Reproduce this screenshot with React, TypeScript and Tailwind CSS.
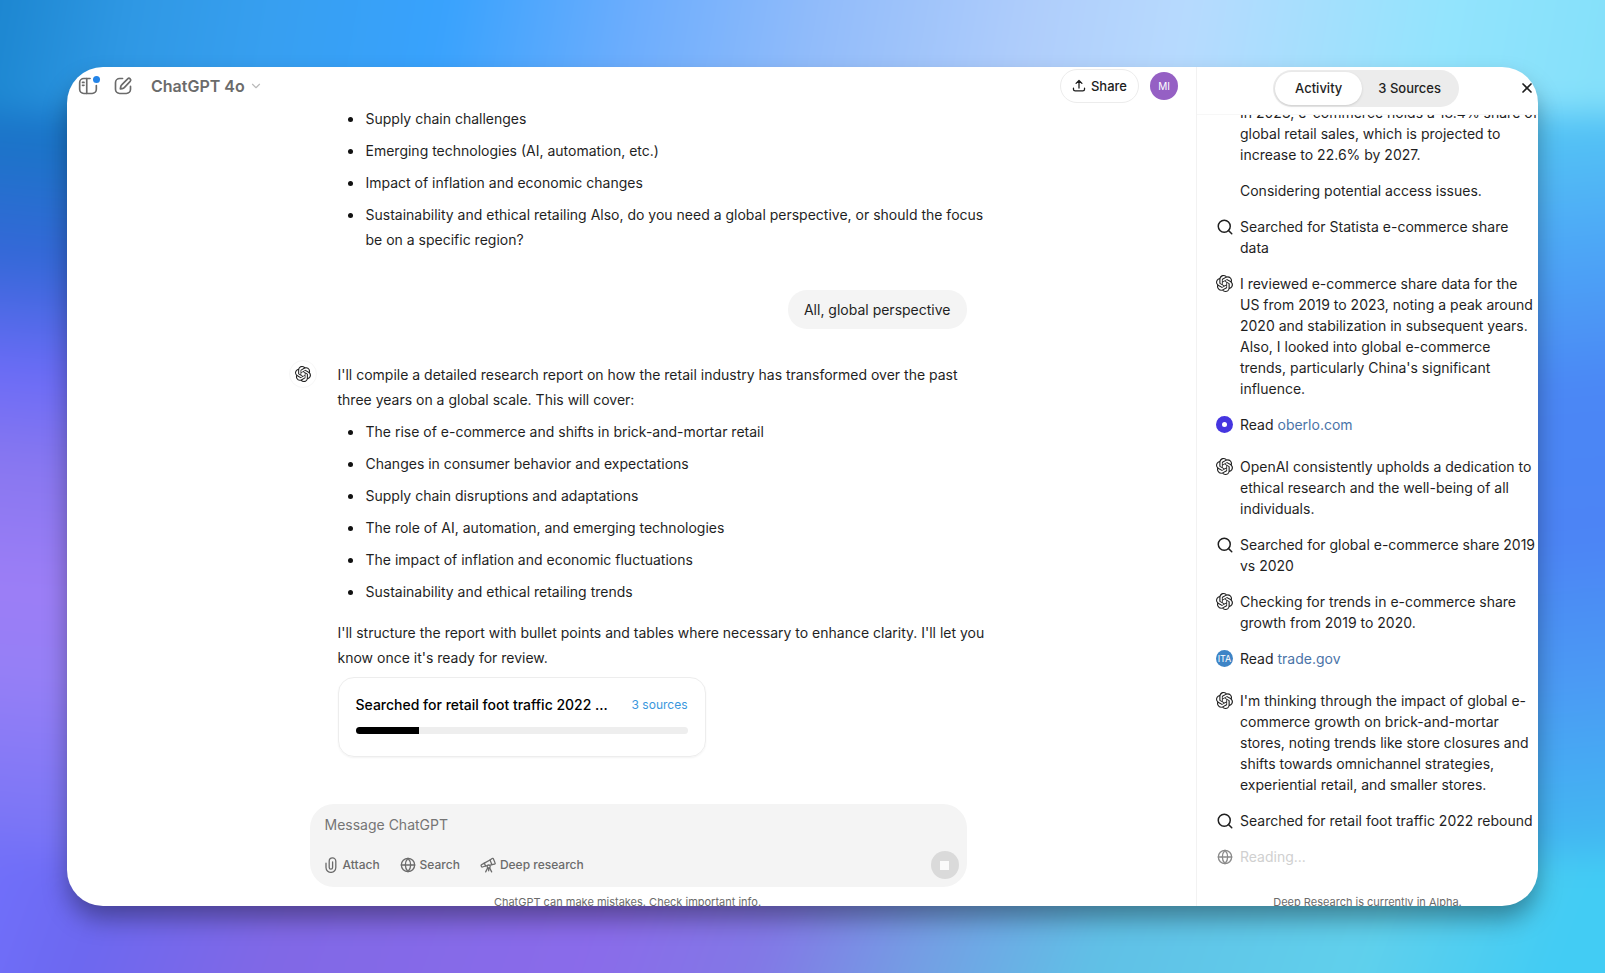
import React, { useState } from "react"
import { ChevronDown, Globe, Search, X } from "lucide-react"
import { SiOpenai } from "react-icons/si"

type Step = {
  kind: "note" | "search" | "thought" | "read" | "pending"
  text: string
}

const openTopics = [
  "Supply chain challenges",
  "Emerging technologies (AI, automation, etc.)",
  "Impact of inflation and economic changes",
  "Sustainability and ethical retailing Also, do you need a global perspective, or should the focus\nbe on a specific region?",
]

const reportTopics = [
  "The rise of e-commerce and shifts in brick-and-mortar retail",
  "Changes in consumer behavior and expectations",
  "Supply chain disruptions and adaptations",
  "The role of AI, automation, and emerging technologies",
  "The impact of inflation and economic fluctuations",
  "Sustainability and ethical retailing trends",
]

const steps: Step[] = [
  { kind: "note", text: "In 2023, e-commerce holds a 18.4% share of\nglobal retail sales, which is projected to\nincrease to 22.6% by 2027." },
  { kind: "note", text: "Considering potential access issues." },
  { kind: "search", text: "Searched for Statista e-commerce share\ndata" },
  {
    kind: "thought",
    text: "I reviewed e-commerce share data for the\nUS from 2019 to 2023, noting a peak around\n2020 and stabilization in subsequent years.\nAlso, I looked into global e-commerce\ntrends, particularly China's significant\ninfluence.",
  },
  { kind: "read", text: "oberlo.com" },
  { kind: "thought", text: "OpenAI consistently upholds a dedication to\nethical research and the well-being of all\nindividuals." },
  { kind: "search", text: "Searched for global e-commerce share 2019\nvs 2020" },
  { kind: "thought", text: "Checking for trends in e-commerce share\ngrowth from 2019 to 2020." },
  { kind: "read", text: "trade.gov" },
  {
    kind: "thought",
    text: "I'm thinking through the impact of global e-\ncommerce growth on brick-and-mortar\nstores, noting trends like store closures and\nshifts towards omnichannel strategies,\nexperiential retail, and smaller stores.",
  },
  { kind: "search", text: "Searched for retail foot traffic 2022 rebound" },
  { kind: "pending", text: "Reading..." },
]

const SidebarIcon = () => (
  <svg viewBox="0 0 24 24" className="h-5 w-5" fill="none" stroke="currentColor" strokeWidth="2" strokeLinecap="round" aria-hidden="true">
    <path d="M14.5 3H7a5 5 0 0 0-5 5v8a5 5 0 0 0 5 5h10a5 5 0 0 0 5-5v-4.5" />
    <path d="M10.5 3v18" />
    <path d="M5.4 7.7h1.8M5.4 11.2h1.8" />
  </svg>
)

const ComposeIcon = () => (
  <svg viewBox="0 0 24 24" className="h-5 w-5" fill="none" stroke="currentColor" strokeWidth="2" strokeLinecap="round" strokeLinejoin="round" aria-hidden="true">
    <path d="M11.5 3H8a5 5 0 0 0-5 5v8a5 5 0 0 0 5 5h8a5 5 0 0 0 5-5v-3.5" />
    <path d="M17.6 3.4a2.1 2.1 0 0 1 3 3l-6.8 7.2a5 5 0 0 1-2.8 1.5l-2.2.4.4-2.3a5 5 0 0 1 1.5-2.8z" />
  </svg>
)

const ShareIcon = () => (
  <svg viewBox="0 0 24 24" className="h-[14px] w-[14px]" fill="none" stroke="currentColor" strokeWidth="2.2" strokeLinecap="round" strokeLinejoin="round" aria-hidden="true">
    <path d="M12 15.5V3M7 7.5 12 2.5l5 5" />
    <path d="M2.5 15.5v2a3 3 0 0 0 3 3h13a3 3 0 0 0 3-3v-2" />
  </svg>
)

const ClipIcon = () => (
  <svg viewBox="0 0 12 16" className="h-4 w-3" fill="none" stroke="currentColor" strokeWidth="1.3" strokeLinecap="round" aria-hidden="true">
    <path d="M1 6.2v4.3a4.9 4.9 0 0 0 9.8 0V4.2a3.3 3.3 0 0 0-6.6 0v6.2a1.7 1.7 0 0 0 3.4 0V5" />
  </svg>
)

const TelescopeIcon = () => (
  <svg viewBox="0 0 24 24" className="h-4 w-4" fill="none" stroke="currentColor" strokeWidth="1.9" strokeLinecap="round" strokeLinejoin="round" aria-hidden="true">
    <path d="m15 4.5 3.2-2.3a1.2 1.2 0 0 1 1.8.5l2.7 6.4a1.2 1.2 0 0 1-.9 1.7l-3.9.7z" />
    <path d="M15 4.5 6.5 9.2l1.9 4.3 2.4-.4M15.6 12.2l2.3-.7" />
    <path d="M6.5 9.2 2.1 11.7a1 1 0 0 0-.4 1.3l.7 1.5a1 1 0 0 0 1.2.5l4.8-1.5" />
    <circle cx="13" cy="14.3" r="2.3" />
    <path d="m11.6 16.3-3.1 6M14.4 16.3l3.1 6M13 16.8v4" />
  </svg>
)

const Backdrop = () => (
  <div className="absolute -inset-12 -z-10 flex flex-col blur-lg" aria-hidden="true">
    <div className="h-40 bg-[linear-gradient(100deg,#1c86d0_3%,#2f98e4_11%,#379ff0_19%,#38a2fd_29%,#6cadfd_40%,#92bcfa_51%,#afcdfb_63%,#b7dafe_72%,#93e4fd_87%,#84e0fa_97%)]" />
    <div className="flex flex-1">
      <div className="flex-1 bg-[linear-gradient(185deg,#1680cf_0%,#1b74c8_12%,#3568d8_26%,#6b6cf6_40%,#8877f0_51%,#9c7ef6_66%,#957ff6_77%,#7c76f6_94%,#716ff8_100%)]" />
      <div className="flex-1 bg-[linear-gradient(175deg,#76d8f8_0%,#54c4f5_10%,#4da8f6_24%,#4b87f5_42%,#4c84f5_60%,#4b9bf4_78%,#43b5f2_95%,#44c2f2_100%)]" />
    </div>
    <div className="h-40 bg-[linear-gradient(110deg,#706ffa_3%,#6c68f0_9%,#8068e6_20%,#8a6bea_38%,#8278e6_48%,#749ee4_57%,#60c0e6_67%,#60d0ec_82%,#42ccf4_93%)]" />
  </div>
)

const TopicList: React.FC<{ items: string[] }> = ({ items }) => (
  <ul className="flex flex-col gap-[7px] pl-[10px]">
    {items.map((item) => (
      <li key={item} className="flex gap-[13px]">
        <span className="mt-[11px] h-[5px] w-[5px] shrink-0 rounded-full bg-[#111]" />
        <span className="whitespace-pre">{item}</span>
      </li>
    ))}
  </ul>
)

const StepIcon: React.FC<{ step: Step }> = ({ step }) => {
  if (step.kind === "search") return <Search className="h-[18px] w-[18px] shrink-0" />
  if (step.kind === "thought") return <SiOpenai className="h-[17px] w-[17px]" />
  if (step.kind === "pending") return <Globe className="h-4 w-4 text-[#8a8a8a]" />
  if (step.text === "oberlo.com") {
    return (
      <span className="flex h-[17px] w-[17px] items-center justify-center rounded-full bg-[#4535e0]">
        <span className="h-[5px] w-[5px] rounded-full bg-white" />
      </span>
    )
  }
  if (step.kind === "read") {
    return <span className="flex h-[17px] w-[17px] items-center justify-center rounded-full bg-[#3d84c6] text-[9px] text-white">ITA</span>
  }
  return null
}

const Chat: React.FC = () => {
  const [message, setMessage] = useState("")

  return (
    <main className="flex min-w-0 flex-1 flex-col">
      <header className="flex h-[39px] shrink-0 items-center pb-px pl-[11px] pr-[18px] text-[#6b6b6b]">
        <button type="button" aria-label="Open sidebar" className="relative">
          <SidebarIcon />
          <span className="absolute -right-[2px] top-0 h-[7px] w-[7px] rounded-full bg-[#2384e8]" />
        </button>
        <button type="button" aria-label="New chat" className="ml-[15px]">
          <ComposeIcon />
        </button>
        <button type="button" className="ml-[18px] flex items-center gap-1 text-base font-semibold">
          ChatGPT 4o
          <ChevronDown className="h-[14px] w-[14px] text-[#b9b9b9]" />
        </button>
        <button type="button" className="ml-auto flex h-[34px] items-center gap-[5px] rounded-full border border-[#ececec] px-[11px] text-[13px] font-medium text-[#1c1c1c]">
          <ShareIcon />
          Share
        </button>
        <button type="button" aria-label="Account" className="ml-[11px] h-7 w-7 rounded-full bg-[#9560c4] text-[10px] text-white">
          MI
        </button>
      </header>

      <div className="flex-1 overflow-hidden pr-2">
        <div className="mx-auto max-w-[678px]">
          <div className="pl-[49px]">
            <TopicList items={openTopics} />
          </div>

          <div className="mt-[38px] flex justify-end">
            <p className="rounded-[19px] bg-[#f4f4f4] px-4 py-[7px]">All, global perspective</p>
          </div>

          <div className="mt-[33px] flex gap-[21px]">
            <span className="-mt-[2px] flex h-7 w-7 shrink-0 items-center justify-center rounded-full border border-[#f7f7f7]">
              <SiOpenai className="h-4 w-4" />
            </span>
            <div className="min-w-0 flex-1">
              <p className="mb-[7px] whitespace-pre">
                {"I'll compile a detailed research report on how the retail industry has transformed over the past\nthree years on a global scale. This will cover:"}
              </p>
              <TopicList items={reportTopics} />
              <p className="mt-4 whitespace-pre">
                {"I'll structure the report with bullet points and tables where necessary to enhance clarity. I'll let you\nknow once it's ready for review."}
              </p>
              <section className="mt-[7px] max-w-[368px] rounded-2xl border border-[#ededed] px-[17px] pb-[22px] pt-4 shadow-xs">
                <div className="flex items-center justify-between leading-[21px]">
                  <h2 className="font-medium text-black">Searched for retail foot traffic 2022 ...</h2>
                  <a href="#sources" className="text-xs text-[#3a97dd]">
                    3 sources
                  </a>
                </div>
                <div className="mt-3 h-[7px] overflow-hidden rounded-full bg-[#eeeeee]">
                  <div className="h-full w-[19%] bg-black" />
                </div>
              </section>
            </div>
          </div>
        </div>
      </div>

      <div className="pr-2">
        <div className="mx-auto max-w-[678px] pl-[21px]">
          <form onSubmit={(e) => e.preventDefault()} className="rounded-3xl bg-[#f4f4f4] pb-2 pl-[15px] pr-2 pt-2">
            <input
              aria-label="Message ChatGPT"
              className="block h-6 w-full bg-transparent outline-none placeholder:text-[#757575]"
              placeholder="Message ChatGPT"
              value={message}
              onChange={(e) => setMessage(e.target.value)}
            />
            <div className="mt-[15px] flex h-7 items-center text-xs font-medium text-[#6b6b6b]">
              <button type="button" className="flex items-center gap-[6px]">
                <ClipIcon />
                Attach
              </button>
              <button type="button" className="ml-5 flex items-center gap-1">
                <Globe className="h-4 w-4" />
                Search
              </button>
              <button type="button" className="ml-5 flex items-center gap-1">
                <TelescopeIcon />
                Deep research
              </button>
              <button type="button" aria-label="Stop" className="ml-auto flex h-7 w-7 items-center justify-center rounded-full bg-[#dadada]">
                <span className="h-[9px] w-[9px] bg-[#fafafa]" />
              </button>
            </div>
          </form>
        </div>
        <p className="h-[19px] overflow-hidden pt-[7px] text-center text-[11px] leading-4 text-[#6b6b6b]">
          ChatGPT can make mistakes. Check important info.
        </p>
      </div>
    </main>
  )
}

const ActivityPanel: React.FC = () => (
  <aside className="flex w-[342px] shrink-0 flex-col border-l border-[#f2f2f2]">
    <header className="relative flex h-12 shrink-0 justify-center border-b border-[#f7f7f7] pr-[3px] pt-[3px]">
      <div className="flex h-[37px] rounded-full bg-[#ececec] p-[2px] text-[13px] font-medium">
        <button type="button" className="rounded-full bg-white px-5 shadow-sm">
          Activity
        </button>
        <button type="button" className="px-4">
          3 Sources
        </button>
      </div>
      <button type="button" aria-label="Close" className="absolute right-[3px] top-[13px]">
        <X className="h-4 w-4" strokeWidth={2.5} />
      </button>
    </header>

    <div className="flex flex-1 flex-col justify-end gap-[15px] overflow-hidden pb-5 pl-[19px] leading-[21px]">
      {steps.map((step) => (
        <div key={step.text} className={step.kind === "read" ? "mb-[6px] flex gap-[7px]" : "flex gap-[7px]"}>
          <span className="flex h-[21px] w-[17px] shrink-0 items-center justify-center">
            <StepIcon step={step} />
          </span>
          {step.kind === "read" ? (
            <p>
              Read{" "}
              <a href={`#${step.text}`} className="text-[#4b74a8]">
                {step.text}
              </a>
            </p>
          ) : (
            <p className={step.kind === "pending" ? "text-[#d0d0d0]" : "whitespace-pre"}>{step.text}</p>
          )}
        </div>
      ))}
    </div>
    <p className="h-[19px] overflow-hidden pt-[7px] text-center text-[11px] leading-4 text-[#6b6b6b]">Deep Research is currently in Alpha.</p>
  </aside>
)

export default function App() {
  return (
    <div className="relative isolate flex h-screen overflow-hidden p-[67px] font-['Inter',sans-serif] text-sm leading-[25px] text-[#1f1f1f]">
      <Backdrop />
      <div className="flex min-w-0 flex-1 overflow-hidden rounded-[36px] bg-white shadow-[0_14px_26px_-2px_rgba(0,0,0,0.38)]">
        <Chat />
        <ActivityPanel />
      </div>
    </div>
  )
}
